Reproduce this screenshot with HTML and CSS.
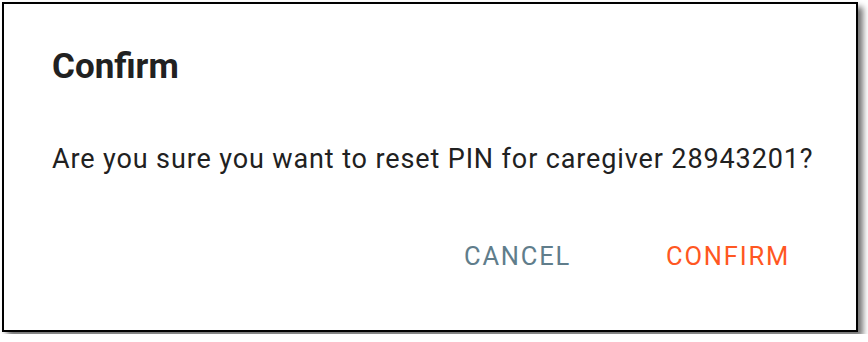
FILE: index.html
```html
<!DOCTYPE html>
<html>
<head>
<meta charset="utf-8">
<link rel="stylesheet" href="styles.css">
</head>
<body>
<div class="dialog">
  <h2 class="title">Confirm</h2>
  <p class="content">Are you sure you want to reset PIN for caregiver 28943201?</p>
  <div class="actions">
    <button class="btn btn-cancel">Cancel</button>
    <button class="btn btn-confirm">Confirm</button>
  </div>
</div>
</body>
</html>
```

FILE: styles.css
```css
html, body {
  margin: 0;
  padding: 0;
  background: #fff;
}
body {
  font-family: Roboto, "Liberation Sans", sans-serif;
  padding: 2px;
}
.dialog {
  box-sizing: border-box;
  width: 856px;
  height: 330px;
  border: 2px solid #000;
  background: #fff;
  box-shadow: 5px 5px 6px rgba(0, 0, 0, 0.55);
  padding: 43px 0 0 48px;
  display: flex;
  flex-direction: column;
}
.title {
  margin: 0;
  font-size: 35px;
  line-height: 40px;
  font-weight: 700;
  color: #212121;
}
.content {
  margin: 57px 0 0 0;
  font-size: 27px;
  line-height: 30px;
  color: #212121;
  letter-spacing: 0.88px;
}
.actions {
  margin-top: 67px;
  display: flex;
  justify-content: flex-end;
  gap: 63px;
  padding-right: 50px;
}
.btn {
  background: none;
  border: 0;
  padding: 0 16px;
  font-family: inherit;
  font-size: 25.5px;
  line-height: 30px;
  text-transform: uppercase;
  letter-spacing: 1.8px;
  cursor: pointer;
}
.btn-cancel { color: #607d8b; }
.btn-confirm { color: #ff5722; }
```
